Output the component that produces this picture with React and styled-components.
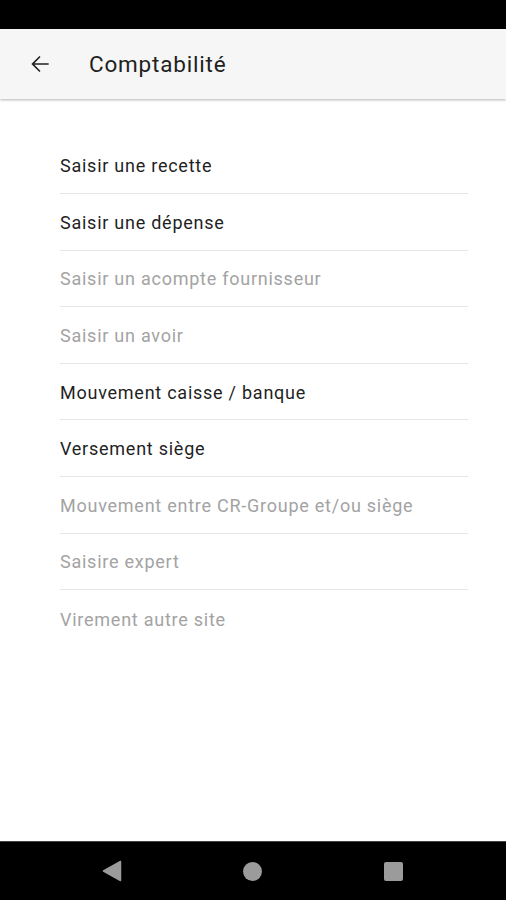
import React from "react";
import styled, {createGlobalStyle} from "styled-components";

const GlobalStyle = createGlobalStyle`
  html, body {
    margin: 0;
    padding: 0;
    background: #000;
  }
  body {
    font-family: Roboto, "Noto Sans", sans-serif;
  }
`;

const items = [
  {label: "Saisir une recette", enabled: true},
  {label: "Saisir une dépense", enabled: true},
  {label: "Saisir un acompte fournisseur", enabled: false},
  {label: "Saisir un avoir", enabled: false},
  {label: "Mouvement caisse / banque", enabled: true},
  {label: "Versement siège", enabled: true},
  {label: "Mouvement entre CR-Groupe et/ou siège", enabled: false},
  {label: "Saisire expert", enabled: false},
  {label: "Virement autre site", enabled: false},
];

function BackArrow() {
  return (
    <svg width="26" height="26" viewBox="0 0 24 24">
      <path
        d="M20 11.25H6.9l5.6-5.6-1.06-1.06L4.03 12l7.41 7.41 1.06-1.06-5.6-5.6H20z"
        fill="#222"
      />
    </svg>
  );
}

function App() {
  return (
    <Screen>
      <GlobalStyle />
      <StatusBar />
      <AppBar>
        <IconButton aria-label="Retour">
          <BackArrow />
        </IconButton>
        <Title>Comptabilité</Title>
      </AppBar>
      <Content>
        <Menu>
          {items.map((item, i) => (
            <MenuItem key={item.label} $enabled={item.enabled} $last={i === items.length - 1}>
              {item.label}
            </MenuItem>
          ))}
        </Menu>
      </Content>
      <NavBar>
        <svg width="20" height="22" viewBox="0 0 20 22">
          <path d="M18.5 1.5 L1.5 11 L18.5 20.5 Z" fill="#9b9b9b" stroke="#9b9b9b" strokeWidth="1.5" strokeLinejoin="round" />
        </svg>
        <HomeDot />
        <RecentSquare />
      </NavBar>
    </Screen>
  );
}

const Screen = styled.div`
  width: 506px;
  height: 900px;
  display: flex;
  flex-direction: column;
  background: #fff;
  overflow: hidden;
`;

const StatusBar = styled.div`
  height: 29px;
  background: #000;
  flex-shrink: 0;
`;

const AppBar = styled.header`
  height: 70px;
  flex-shrink: 0;
  display: flex;
  align-items: center;
  background: #f6f6f6;
  box-shadow: 0 1px 2px rgba(0, 0, 0, 0.22), 0 2px 3px rgba(0, 0, 0, 0.06);
  position: relative;
  z-index: 1;
`;

const IconButton = styled.button`
  width: 26px;
  height: 26px;
  margin-left: 27px;
  margin-right: 36px;
  padding: 0;
  border: 0;
  background: none;
  display: flex;
  align-items: center;
  justify-content: center;
`;

const Title = styled.h1`
  margin: 0;
  font-size: 22.5px;
  font-weight: 400;
  color: #212121;
  letter-spacing: 0.8px;
`;

const Content = styled.main`
  flex: 1;
  background: #fff;
  padding: 38.5px 38px 0 60px;
`;

const Menu = styled.ul`
  list-style: none;
  margin: 0;
  padding: 0;
`;

const MenuItem = styled.li`
  box-sizing: border-box;
  height: 56.6px;
  display: flex;
  align-items: center;
  font-size: 18px;
  letter-spacing: 0.75px;
  color: ${(p) => (p.$enabled ? "#1f1f1f" : "#a3a3a3")};
  border-bottom: ${(p) => (p.$last ? "none" : "1px solid #e6e6e6")};
  padding-top: 1px;
`;

const NavBar = styled.nav`
  height: 58px;
  flex-shrink: 0;
  background: #000;
  border-top: 1px solid #444;
  display: grid;
  grid-template-columns: 20px 20px 20px;
  justify-content: center;
  column-gap: 121px;
  align-items: center;
`;

const HomeDot = styled.div`
  width: 19px;
  height: 19px;
  border-radius: 50%;
  background: #9b9b9b;
`;

const RecentSquare = styled.div`
  width: 19px;
  height: 19px;
  border-radius: 2px;
  background: #9b9b9b;
`;

export default App;
